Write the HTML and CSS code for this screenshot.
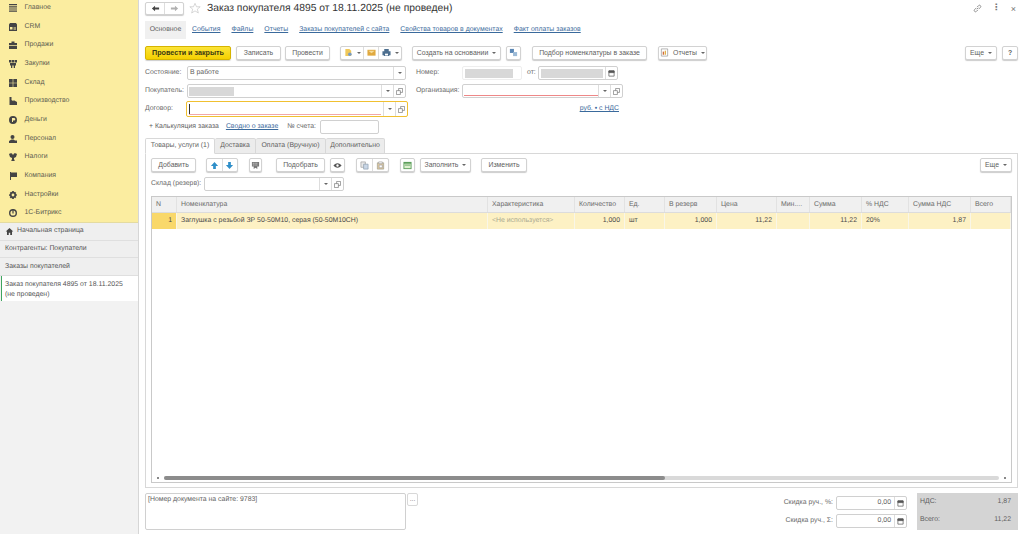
FILE: index.html
```html
<!DOCTYPE html>
<html lang="ru">
<head>
    <meta charset="UTF-8">
    <title>Заказ покупателя 4895</title>
    <link rel="stylesheet" href="styles.css">
</head>
<body>
    <aside class="sidebar">
        <nav class="menu">
            <div class="menu-item"><svg viewBox="0 0 10 10"><path d="M1 1h8v1.200H1zM1 3.200h8v1.200H1zM1 5.400h8v1.200H1zM1 7.600h8v1.200H1z"/></svg>Главное</div>
            <div class="menu-item"><svg viewBox="0 0 10 10"><path d="M1 2.500 2 1h6l1 1.500V9H1zM2 5v2.500h2.500V5zm3.500.5v.8H8v-.8zm0 1.300v.7H8v-.7z" fill-rule="evenodd"/></svg>CRM</div>
            <div class="menu-item"><svg viewBox="0 0 10 10"><path d="M1 3h2.500V1.500h3V3H9v2H1zM1 5.700h8V9H1z"/></svg>Продажи</div>
            <div class="menu-item"><svg viewBox="0 0 10 10"><path d="M1 1h2.500v2.500H1zM4 1h2v2.500H4zM6.500 1H9v2.500H6.500zM2 4h6v2.500H7V9H5.700V6.500H4.300V9H3V6.500H2z"/></svg>Закупки</div>
            <div class="menu-item"><svg viewBox="0 0 10 10"><path d="M1 1h3.700v3.700H1zM5.300 1H9v3.700H5.300zM1 5.300h3.700V9H1zM5.300 5.300H9V9H5.300z"/></svg>Склад</div>
            <div class="menu-item"><svg viewBox="0 0 10 10"><path d="M1.500 1h2v3l2 1.200V4l3.500 2v3H1.500z"/></svg>Производство</div>
            <div class="menu-item"><svg viewBox="0 0 10 10"><path d="M5 1a4 4 0 1 0 0 8 4 4 0 0 0 0-8zM4 3h2a1.300 1.300 0 0 1 0 2.600H5V7H4z" fill-rule="evenodd"/></svg>Деньги</div>
            <div class="menu-item"><svg viewBox="0 0 10 10"><circle cx="4.500" cy="3" r="2"/><path d="M1 9V7l2.500-1.500h2L7 6.500h2V9z"/></svg>Персонал</div>
            <div class="menu-item"><svg viewBox="0 0 10 10"><path d="M1 2c1-.8 2-1 3-.4L5 3l1-1.400c1-.6 2-.4 3 .4L8 5 6 6v1l.8 2H3.200L4 7V6L2 5z"/></svg>Налоги</div>
            <div class="menu-item"><svg viewBox="0 0 10 10"><path d="M2 1h1v8H2zM3 1.500h6v4.500H3z"/></svg>Компания</div>
            <div class="menu-item"><svg viewBox="0 0 10 10"><path d="M4.200 1h1.600l.2 1.200 1-.5L8.300 3l-.7 1 1.200.3v1.500l-1.200.2.700 1-1.200 1.200-1-.7L5.800 9H4.200L4 7.800 3 8.500 1.700 7.300l.7-1L1.200 6V4.300L2.400 4l-.7-1L3 1.700l1 .5zM5 3.600a1.400 1.400 0 1 0 0 2.800 1.400 1.400 0 0 0 0-2.800z" fill-rule="evenodd"/></svg>Настройки</div>
            <div class="menu-item"><svg viewBox="0 0 10 10"><path d="M5 1a4 4 0 1 0 0 8 4 4 0 0 0 0-8zm0 1.400a2.600 2.600 0 1 1 0 5.200 2.600 2.600 0 0 1 0-5.200z" fill-rule="evenodd"/><path d="M4.400 1h1.200v4.500H4.400z"/></svg>1С-Битрикс</div>
        </nav>
        <div class="open-list">
            <div class="open-item home"><svg viewBox="0 0 10 10"><path d="M5 1 .8 5h1.400v4h2V6.300h1.600V9h2V5h1.400z"/></svg>Начальная страница</div>
            <div class="open-item">Контрагенты: Покупатели</div>
            <div class="open-item">Заказы покупателей</div>
            <div class="open-item current">Заказ покупателя 4895 от 18.11.2025<br>(не проведен)</div>
        </div>
    </aside>

    <main class="form">
        <header class="titlebar">
            <div class="btn-group nav-arrows">
                <span class="seg"><svg class="ico" viewBox="0 0 10 10"><path fill="#444" d="M4.500 2 1 5l3.500 3V6H9V4H4.500z"/></svg></span>
                <span class="seg"><svg class="ico" viewBox="0 0 10 10"><path fill="#b0b0b0" d="M5.500 2 9 5 5.500 8V6H1V4h4.500z"/></svg></span>
            </div>
            <svg class="star" viewBox="0 0 14 14"><path d="M7 1l1.800 4h4.200l-3.300 2.800 1.200 4.400L7 9.800l-3.900 2.400 1.200-4.400L1 5h4.200z"/></svg>
            <h1>Заказ покупателя 4895 от 18.11.2025 (не проведен)</h1>
            <div class="window-tools">
                <svg viewBox="0 0 10 10"><path d="M4.200 5.800 5.800 4.200M3.500 4.500 1.800 6.200a1.400 1.400 0 0 0 2 2L5.500 6.500M4.500 3.500 6.200 1.800a1.400 1.400 0 0 1 2 2L6.500 5.500"/></svg>
                <span class="dots">⋮</span>
                <span class="close">×</span>
            </div>
        </header>

        <div class="form-tabs">
            <span class="form-tab active">Основное</span>
            <a>События</a><a>Файлы</a><a>Отчеты</a><a>Заказы покупателей с сайта</a><a>Свойства товаров в документах</a><a>Факт оплаты заказов</a>
        </div>

        <div class="toolbar main-toolbar">
            <button class="btn primary">Провести и закрыть</button>
            <button class="btn w-record">Записать</button>
            <button class="btn w-post">Провести</button>
            <div class="btn-group docs">
                <span class="seg"><svg class="ico" viewBox="0 0 10 10"><path fill="#f0c85a" d="M1.500 1h4.500l2 2v6H1.500z"/><circle cx="6.500" cy="7" r="2" fill="#7a9cc0"/></svg><i class="caret"></i></span>
                <span class="seg"><svg class="ico" viewBox="0 0 10 10"><path fill="#e0a93f" d="M.5 2h9v6.500h-9z"/><path fill="#f5dc9a" d="M1.500 3h7L5 5.800z"/></svg></span>
                <span class="seg"><svg class="ico" viewBox="0 0 10 10"><path fill="#4d6f8f" d="M2.500 1h5v2.500h2V8H8v1H2V8H.5V3.500h2z"/><path fill="#fff" d="M3.300 6.300h3.400v2H3.300z"/></svg><i class="caret"></i></span>
            </div>
            <button class="btn w-create">Создать на основании<i class="caret"></i></button>
            <span class="icon-btn w-linked"><svg class="ico" viewBox="0 0 10 10"><path fill="#5b87b5" d="M1 1h4.500v4.500H1z"/><path fill="#9cbad6" d="M4.500 4.500H9V9H4.500z"/></svg></span>
            <button class="btn w-pick">Подбор номенклатуры в заказе</button>
            <button class="btn w-reports"><svg class="ico" viewBox="0 0 10 10"><path fill="#fff" stroke="#999" stroke-width=".8" d="M1.500 1h7v8h-7z"/><path fill="#cf6a3a" d="M3 4h1.500v3.500H3z"/><path fill="#e0b04a" d="M5.200 3h1.500v4.500H5.200z"/></svg>Отчеты<i class="caret"></i></button>
            <button class="btn w-more push">Еще<i class="caret"></i></button>
            <button class="btn w-help">?</button>
        </div>

        <div class="head-fields">
            <div class="head-left">
                <div class="field-row">
                    <label>Состояние:</label>
                    <div class="input wide"><span class="value">В работе</span><i class="drop"><i class="caret"></i></i></div>
                </div>
                <div class="field-row">
                    <label>Покупатель:</label>
                    <div class="input wide"><span class="redacted buyer"></span><i class="drop"><i class="caret"></i></i><i class="drop"><svg class="open-ico" viewBox="0 0 8 8"><path d="M.5 3h4.500v4.500H.5zM3 3V.5h4.500V5H5"/></svg></i></div>
                </div>
                <div class="field-row">
                    <label>Договор:</label>
                    <div class="input wide focused"><span class="cursor"></span><span class="required"></span><i class="drop"><i class="caret"></i></i><i class="drop"><svg class="open-ico" viewBox="0 0 8 8"><path d="M.5 3h4.500v4.500H.5zM3 3V.5h4.500V5H5"/></svg></i></div>
                </div>
            </div>
            <div class="head-right">
                <div class="field-row">
                    <label class="short">Номер:</label>
                    <div class="input number"><span class="redacted fill"></span></div>
                    <label class="from">от:</label>
                    <div class="input date"><span class="redacted fill"></span><i class="drop"><svg class="cal" viewBox="0 0 8 8"><path d="M1 1h6v6H1z" fill="none"/><path d="M1 1h6v2H1z"/></svg></i></div>
                </div>
                <div class="field-row">
                    <label class="short">Организация:</label>
                    <div class="input org"><span class="required"></span><i class="drop"><i class="caret"></i></i><i class="drop"><svg class="open-ico" viewBox="0 0 8 8"><path d="M.5 3h4.500v4.500H.5zM3 3V.5h4.500V5H5"/></svg></i></div>
                </div>
                <div class="field-row currency-row"><a>руб. • с НДС</a></div>
            </div>
        </div>

        <div class="calc-row">
            <span class="plain">+ Калькуляция заказа</span>
            <a>Сводно о заказе</a>
            <label>№ счета:</label>
            <div class="input invoice"></div>
        </div>

        <div class="page-tabs">
            <span class="page-tab active t-goods">Товары, услуги (1)</span>
            <span class="page-tab t-delivery">Доставка</span>
            <span class="page-tab t-pay">Оплата (Вручную)</span>
            <span class="page-tab t-extra">Дополнительно</span>
        </div>

        <section class="panel">
            <div class="toolbar panel-toolbar">
                <button class="btn w-add">Добавить</button>
                <div class="btn-group arrows">
                    <span class="seg"><svg class="ico" viewBox="0 0 10 10"><path fill="#2f8fc9" d="M5 1 9 5.500H6.500V9h-3V5.500H1z"/></svg></span>
                    <span class="seg"><svg class="ico" viewBox="0 0 10 10"><path fill="#2f8fc9" d="M5 9 1 4.500h2.500V1h3v3.500H9z"/></svg></span>
                </div>
                <span class="icon-btn w-table"><svg class="ico" viewBox="0 0 10 10"><path fill="#777" d="M1 1h8v5H7v3l-2-1.500L3 9V6H1z"/><path fill="#ddd" d="M2 2h1v1H2zm2 0h1v1H4zm2 0h1v1H6zM2 4h1v1H2zm2 0h1v1H4zm2 0h1v1H6z"/></svg></span>
                <button class="btn w-pickup">Подобрать</button>
                <span class="icon-btn eye"><svg class="ico" viewBox="0 0 10 10"><path fill="#555" d="M5 2.500C3 2.500 1.500 3.800.5 5c1 1.200 2.500 2.500 4.500 2.500S8.500 6.200 9.500 5C8.500 3.800 7 2.500 5 2.500z"/><circle cx="5" cy="5" r="1.300" fill="#fff"/></svg></span>
                <div class="btn-group copy">
                    <span class="seg"><svg class="ico" viewBox="0 0 10 10"><path fill="#e8e8e8" stroke="#999" stroke-width=".7" d="M1 1h5v6H1z"/><path fill="#c9d6e6" stroke="#8899aa" stroke-width=".7" d="M4 3.500h5V9H4z"/></svg></span>
                    <span class="seg"><svg class="ico" viewBox="0 0 10 10"><path fill="#e0c9a0" stroke="#998" stroke-width=".7" d="M1.500 2h7v7h-7z"/><path fill="#fff" stroke="#999" stroke-width=".7" d="M3 1h4v2H3zM3.500 4.500h3.500v3H3.500z"/></svg></span>
                </div>
                <span class="icon-btn w-excel"><svg class="ico" viewBox="0 0 10 10"><path fill="#5c9e5c" d="M.5 1h9v8h-9z"/><path fill="#dff0d0" d="M1.500 3h7v5h-7z"/><path fill="#5c9e5c" d="M2 4h6v1H2z"/></svg></span>
                <button class="btn w-fill">Заполнить<i class="caret"></i></button>
                <button class="btn w-edit">Изменить</button>
                <button class="btn w-more push">Еще<i class="caret"></i></button>
            </div>

            <div class="field-row stock-row">
                <label>Склад (резерв):</label>
                <div class="input stock"><i class="drop"><i class="caret"></i></i><i class="drop"><svg class="open-ico" viewBox="0 0 8 8"><path d="M.5 3h4.500v4.500H.5zM3 3V.5h4.500V5H5"/></svg></i></div>
            </div>

            <div class="grid">
                <div class="grid-row grid-head">
                    <span>N</span><span>Номенклатура</span><span>Характеристика</span><span>Количество</span><span>Ед.</span><span>В резерв</span><span>Цена</span><span>Мин....</span><span>Сумма</span><span>% НДС</span><span>Сумма НДС</span><span>Всего</span>
                </div>
                <div class="grid-row grid-line">
                    <span class="num marker">1</span><span>Заглушка с резьбой ЗР 50-50М10, серая (50-50М10СН)</span><span class="muted">&lt;Не используется&gt;</span><span class="num">1,000</span><span>шт</span><span class="num">1,000</span><span class="num">11,22</span><span></span><span class="num">11,22</span><span>20%</span><span class="num">1,87</span><span></span>
                </div>
                <div class="grid-body"></div>
                <div class="scrollbar"><i class="tip"></i><div class="track"><div class="thumb"></div></div><i class="tip"></i></div>
            </div>
        </section>

        <footer class="form-bottom">
            <div class="comment">[Номер документа на сайте: 9783]</div>
            <span class="comment-btn">...</span>
            <div class="discounts">
                <div class="field-row">
                    <label>Скидка руч., %:</label>
                    <div class="input money"><span class="value">0,00</span><i class="drop"><svg class="cal" viewBox="0 0 8 8"><path d="M1 1h6v6H1z" fill="none"/><path d="M1 1h6v2H1z"/></svg></i></div>
                </div>
                <div class="field-row">
                    <label>Скидка руч., Σ:</label>
                    <div class="input money"><span class="value">0,00</span><i class="drop"><svg class="cal" viewBox="0 0 8 8"><path d="M1 1h6v6H1z" fill="none"/><path d="M1 1h6v2H1z"/></svg></i></div>
                </div>
            </div>
            <div class="totals">
                <div class="total-row"><span>НДС:</span><b>1,87</b></div>
                <div class="total-row"><span>Всего:</span><b>11,22</b></div>
            </div>
        </footer>
    </main>
</body>
</html>
```

FILE: styles.css
```css
* {
    box-sizing: border-box;
}

html, body {
    height: 100%;
}

body {
    display: flex;
    width: 1024px;
    height: 534px;
    margin: 0;
    overflow: hidden;
    background-color: #fff;
    color: #5e5e5e;
    font: 6.9px/10px "Liberation Sans", Arial, sans-serif;
    text-rendering: geometricPrecision;
    white-space: nowrap;
}

a {
    color: #3a6a9c;
    text-decoration: underline;
}

/* левая панель */
.sidebar {
    display: flex;
    flex-direction: column;
    flex: 0 0 139px;
    background-color: #f2f2f2;
    border-right: 1px solid #d6d6d6;
}

.menu {
    height: 223px;
    background-color: #fbeda0;
    border-bottom: 1px solid #e4dba0;
}

.menu-item {
    display: flex;
    align-items: center;
    height: 18.7px;
    padding-left: 8px;
    color: #5c5c50;
}

.menu-item:first-child {
    margin-top: -1.5px;
}

.menu-item svg {
    width: 10px;
    height: 10px;
    margin-right: 6.5px;
    fill: #444;
}

.open-item {
    display: flex;
    align-items: center;
    height: 17.7px;
    padding-left: 5px;
    background-color: #efefef;
    border-bottom: 1px solid #dfdfdf;
    color: #555;
}

.open-item.home svg {
    width: 9px;
    height: 9px;
    margin-right: 3px;
    fill: #444;
}

.open-item.current {
    display: block;
    height: 25px;
    margin-left: 1px;
    padding: 4px 0 0 3px;
    line-height: 9.5px;
    background-color: #fff;
    border-bottom: 0;
    border-left: 1px solid #3fa55f;
}

/* форма */
.form {
    display: flex;
    flex-direction: column;
    flex: 1;
    min-width: 0;
    padding: 0 6px;
}

.titlebar {
    display: flex;
    align-items: center;
    height: 17px;
}

.titlebar h1 {
    margin: 0 0 0 6px;
    color: #333;
    font-size: 10.3px;
    line-height: 14px;
    font-weight: normal;
}

.btn-group {
    display: flex;
    height: 14px;
    background: #fff;
    border: 1px solid #d2d2d2;
    border-radius: 2px;
    box-shadow: 0 1px 1px #ccc;
}

.nav-arrows {
    width: 39px;
    height: 13px;
}

.star {
    width: 12px;
    height: 13px;
    margin-left: 5px;
    fill: #fff;
    stroke: #c4c4c4;
    stroke-width: .8;
}

.window-tools {
    display: flex;
    align-items: center;
    gap: 10px;
    margin-left: auto;
    padding-right: 2px;
    color: #777;
}

.window-tools svg {
    width: 9px;
    height: 9px;
    fill: none;
    stroke: #777;
    stroke-width: .9;
}

.dots {
    font: bold 9px/1 "DejaVu Sans", sans-serif;
}

.close {
    font-size: 9px;
}

.form-tabs {
    display: flex;
    align-items: center;
    height: 18px;
    margin-top: 4px;
    gap: 11px;
}

.form-tab {
    display: flex;
    align-items: center;
    justify-content: center;
    width: 41px;
    height: 18px;
    margin-right: -5px;
    background-color: #f0f0f0;
}

.toolbar {
    display: flex;
    align-items: center;
}

.main-toolbar {
    height: 15px;
    margin-top: 6px;
}

.btn {
    display: flex;
    align-items: center;
    justify-content: center;
    height: 14px;
    padding: 0;
    margin: 0;
    background: #fff;
    border: 1px solid #d2d2d2;
    border-radius: 2px;
    box-shadow: 0 1px 1px #ccc;
    color: #5e5e5e;
    font: inherit;
    white-space: nowrap;
}

.primary {
    width: 86px;
    background: linear-gradient(#fbe438, #f5d000);
    border-color: #d6b400;
    color: #3d3a10;
    font-size: 7.2px;
    font-weight: bold;
}

.w-record { width: 45px; margin-left: 5px; }
.w-post { width: 45px; margin-left: 4px; }
.docs { margin-left: 10px; width: 62px; }
.w-create { width: 89px; margin-left: 10px; }
.w-linked { width: 16px; margin-left: 5px; }
.w-pick { width: 115px; margin-left: 11px; }
.w-reports { width: 49px; margin-left: 11px; }
.w-help { width: 16px; margin-left: 5px; font-weight: bold; }
.w-more { width: 32px; }

.push {
    margin-left: auto;
}

.seg {
    display: flex;
    flex: 1 1 auto;
    align-items: center;
    justify-content: center;
    border-right: 1px solid #ddd;
}

.seg:last-child {
    border-right: 0;
}

.ico {
    flex: none;
    width: 9px;
    height: 9px;
}

.w-reports .ico {
    margin-right: 4px;
}

.caret {
    display: inline-block;
    flex: none;
    width: 0;
    height: 0;
    margin-left: 4px;
    border-top: 2px solid #666;
    border-left: 2px solid transparent;
    border-right: 2px solid transparent;
}

.icon-btn {
    display: flex;
    align-items: center;
    justify-content: center;
    width: 15px;
    height: 14px;
    background: #fff;
    border: 1px solid #d2d2d2;
    border-radius: 2px;
    box-shadow: 0 1px 1px #ccc;
}

.head-fields {
    display: flex;
    height: 53px;
    margin-top: 4px;
}

.head-left {
    width: 263px;
}

.head-right {
    margin-left: 8px;
}

.field-row {
    display: flex;
    align-items: center;
    height: 18px;
}

.field-row label {
    color: #6a6a6a;
}

.head-left label {
    width: 42px;
}

.field-row .short {
    width: 46px;
}

.field-row .from {
    width: 11px;
    margin-left: 5px;
}

.input {
    display: flex;
    position: relative;
    align-items: center;
    height: 14px;
    padding-left: 2px;
    background: #fff;
    border: 1px solid #d0d0d0;
    border-radius: 2px;
    color: #5e5e5e;
}

.value {
    flex: 1;
}

.wide {
    width: 219px;
}

.wide.focused {
    width: 222px;
    height: 16px;
    margin-left: -1px;
    border: 1px solid #f0c030;
}

.cursor {
    width: 1px;
    height: 10px;
    background: #333;
}

.required {
    position: absolute;
    left: 2px;
    right: 26px;
    bottom: 1px;
    height: 1px;
    background: #f1a8a8;
}

.org .required {
    left: 1px;
    right: 24px;
    background: #e88;
}

.drop {
    display: flex;
    flex: none;
    align-items: center;
    justify-content: center;
    width: 12px;
    height: 100%;
    border-left: 1px solid #ddd;
}

.drop .caret {
    margin: 0;
}

.input > .drop:first-of-type {
    margin-left: auto;
}

.open-ico {
    width: 7px;
    height: 7px;
    fill: none;
    stroke: #777;
    stroke-width: .8;
}

.cal {
    width: 7px;
    height: 7px;
    fill: #555;
    stroke: #555;
    stroke-width: .8;
}

.redacted {
    display: block;
    height: 9px;
    background-color: #d8d8d8;
}

.buyer {
    width: 45px;
    margin-left: -1px;
}

.fill {
    flex: 1;
    margin-right: 2px;
}

.number {
    width: 60px;
    padding-right: 8px;
    border-color: #eee;
}

.number .fill {
    margin-right: 0;
}

.date {
    width: 80px;
}

.org {
    width: 161px;
}

.currency-row {
    justify-content: flex-end;
    padding-right: 4px;
}

.calc-row {
    display: flex;
    align-items: center;
    height: 14px;
    margin-top: 3px;
    padding-left: 4px;
}

.calc-row a {
    margin-left: 7px;
}

.calc-row label {
    margin: 0 4px 0 9px;
    color: #6a6a6a;
}

.invoice {
    width: 59px;
}

.page-tabs {
    display: flex;
    height: 16px;
    margin-top: 4px;
}

.page-tab {
    display: flex;
    align-items: center;
    justify-content: center;
    background-color: #ececec;
    border: 1px solid #d8d8d8;
    border-left: 0;
    border-radius: 2px 2px 0 0;
    color: #5e5e5e;
}

.page-tab.active {
    position: relative;
    z-index: 1;
    background-color: #fff;
    border-left: 1px solid #d8d8d8;
    border-bottom-color: #fff;
}

.t-goods { width: 70px; }
.t-delivery { width: 41px; }
.t-pay { width: 70px; }
.t-extra { width: 59px; }

.panel {
    display: flex;
    flex-direction: column;
    height: 335px;
    margin-top: -1px;
    padding: 4px 5px;
    border: 1px solid #d8d8d8;
}

.w-add { width: 45px; }
.arrows { width: 32px; margin-left: 10px; }
.w-table { width: 13px; margin-left: 11px; }
.w-pickup { width: 49px; margin-left: 14px; }
.eye { margin-left: 5px; }
.copy { width: 33px; margin-left: 11px; }
.w-excel { margin-left: 11px; }
.w-fill { width: 51px; margin-left: 5px; }
.w-edit { width: 46px; margin-left: 10px; }

.stock-row {
    margin-top: 3px;
}

.stock-row label {
    width: 53px;
}

.stock {
    width: 140px;
}

.grid {
    display: flex;
    flex-direction: column;
    flex: 1;
    margin-top: 3px;
    border: 1px solid #c9c9c9;
}

.grid-row {
    display: grid;
    grid-template-columns: 25px 311px 87px 50px 40px 52px 60px 33px 52px 47px 62px 1fr;
}

.grid-row span {
    padding: 0 4px;
    line-height: 16px;
    overflow: hidden;
}

.grid-head {
    height: 16px;
    background-color: #f0f0f0;
    border-bottom: 1px solid #dcdcdc;
    color: #6a6a6a;
}

.grid-head span {
    border-right: 1px solid #e2e2e2;
}

.grid-line {
    height: 16px;
    background-color: #fdf1c4;
    color: #4a4a4a;
}

.grid-line span {
    border-right: 1px solid #f9f6e8;
}

.grid-line .marker {
    background-color: #f9d86a;
}

.num {
    text-align: right;
}

.grid-line .muted {
    color: #a8a890;
}

.grid-body {
    flex: 1;
}

.scrollbar {
    display: flex;
    align-items: center;
    height: 6px;
    margin-bottom: 1px;
    padding: 0 5px;
}

.tip {
    width: 2px;
    height: 2px;
    background: #888;
}

.track {
    flex: 1;
    height: 4px;
    margin: 0 5px;
    background: #d9d9d9;
    border-radius: 2px;
}

.thumb {
    width: 60%;
    height: 100%;
    background: #8c8c8c;
    border-radius: 2px;
}

.form-bottom {
    display: flex;
    margin-top: 5px;
}

.comment {
    width: 261px;
    height: 37px;
    padding: 1px 2px;
    border: 1px solid #d0d0d0;
    border-radius: 2px;
    color: #5e5e5e;
}

.comment-btn {
    display: flex;
    align-items: center;
    justify-content: center;
    width: 11px;
    height: 13px;
    margin-left: 1px;
    border: 1px solid #d8d8d8;
    border-radius: 2px;
    color: #777;
}

.discounts {
    margin-left: auto;
    padding-top: 3px;
}

.discounts .field-row {
    justify-content: flex-end;
    height: 14px;
    margin-bottom: 4px;
}

.discounts label {
    margin-right: 3px;
}

.money {
    width: 71px;
}

.money .value {
    padding-right: 3px;
    text-align: right;
}

.totals {
    width: 101px;
    height: 37px;
    margin-left: 10px;
    padding: 4px 7px 0 3px;
    background-color: #d4d4d4;
    color: #5e5e5e;
}

.total-row {
    display: flex;
    justify-content: space-between;
    height: 18px;
    line-height: 10px;
}

.total-row b {
    font-weight: normal;
}
```
